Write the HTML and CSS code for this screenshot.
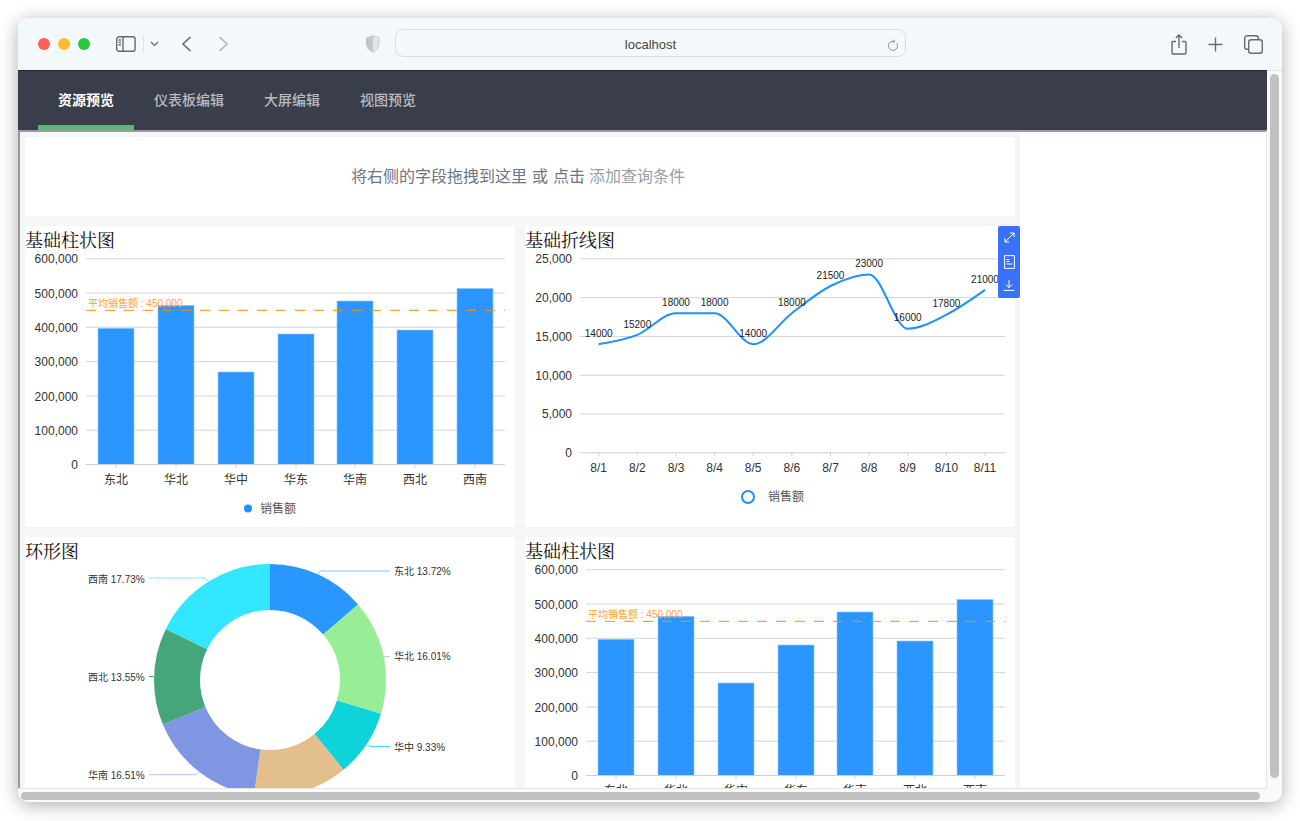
FILE: index.html
```html
<!DOCTYPE html>
<html lang="zh-CN">
<head>
	<meta charset="UTF-8">
	<title>localhost</title>
	<link rel="stylesheet" href="styles.css">
</head>
<body>
	<div class="window">
		<header class="titlebar">
			<div class="lights">
				<span class="light red"></span>
				<span class="light yellow"></span>
				<span class="light green"></span>
			</div>
			<svg class="ico sidebar-ico" width="20" height="16" viewBox="0 0 20 16">
				<rect x="0.7" y="0.7" width="18.4" height="14.6" rx="2.4"/>
				<path d="M7 1v14M2.6 4h2.4M2.6 6.4h2.4M2.6 8.8h2.4"/>
			</svg>
			<span class="tool-sep"></span>
			<svg class="ico chevron-ico" width="9" height="6" viewBox="0 0 9 6"><path d="M1 1l3.5 3.5L8 1"/></svg>
			<svg class="ico back-ico" width="11" height="16" viewBox="0 0 11 16"><path d="M9.5 1L2 8l7.5 7"/></svg>
			<svg class="ico fwd-ico" width="11" height="16" viewBox="0 0 11 16"><path d="M1.5 1L9 8l-7.5 7"/></svg>
			<svg class="shield-ico" width="15" height="18" viewBox="0 0 15 18">
				<path class="shield-l" d="M7.5 .6L1 2.6v6c0 4 2.8 6.800 6.500 8.800z"/>
				<path class="shield-r" d="M7.500 .6L14 2.600v6c0 4-2.800 6.800-6.500 8.800z"/>
			</svg>
			<div class="address">
				<span>localhost</span>
				<svg class="ico reload-ico" width="12" height="13" viewBox="0 0 12 13"><path d="M9.800 4.200A4.600 4.600 0 1 1 6 2.200h1.600M6.200 .6l1.600 1.600-1.600 1.600"/></svg>
			</div>
			<div class="right-tools">
				<svg class="ico" width="16" height="21" viewBox="0 0 16 21">
					<path d="M5 7.500H2a1 1 0 0 0-1 1V19a1 1 0 0 0 1 1h12a1 1 0 0 0 1-1V8.500a1 1 0 0 0-1-1h-3M8 14V1M4.800 4L8 1l3.200 3"/>
				</svg>
				<svg class="ico" width="15" height="15" viewBox="0 0 15 15"><path d="M7.500 .5v14M.5 7.500h14"/></svg>
				<svg class="ico" width="19" height="19" viewBox="0 0 19 19">
					<rect x="4.700" y="4.700" width="13.600" height="13.600" rx="2.500"/>
					<path d="M4.700 14.300H3a2.300 2.300 0 0 1-2.300-2.300V3A2.300 2.300 0 0 1 3 .7h9A2.300 2.300 0 0 1 14.300 3v1.700"/>
				</svg>
			</div>
		</header>

		<div class="frame">
			<div class="view">
				<nav class="nav">
					<a class="tab active">资源预览</a>
					<a class="tab">仪表板编辑</a>
					<a class="tab">大屏编辑</a>
					<a class="tab">视图预览</a>
				</nav>
				<div class="page">
					<div class="canvas">
						<section class="query">将右侧的字段拖拽到这里<span class="word">或</span><span class="word">点击</span><span class="add">添加查询条件</span></section>
						<div class="charts">

							<section class="chart">
								<h2>基础柱状图</h2>
								<svg class="plot" viewBox="25 252 490 275">
									<g class="grid">
										<path d="M86 258.700H505M86 293H505M86 327.300H505M86 361.600H505M86 395.900H505M86 430.200H505"/>
									</g>
									<g class="yaxis">
										<text x="78" y="263">600,000</text>
										<text x="78" y="298">500,000</text>
										<text x="78" y="332">400,000</text>
										<text x="78" y="366">300,000</text>
										<text x="78" y="401">200,000</text>
										<text x="78" y="435">100,000</text>
										<text x="78" y="469">0</text>
									</g>
									<g class="bars">
										<rect x="98" y="328.300" width="36" height="136.200"/>
										<rect x="158" y="305.300" width="36" height="159.200"/>
										<rect x="218" y="372" width="36" height="92.500"/>
										<rect x="278" y="334" width="36" height="130.500"/>
										<rect x="337" y="301" width="36" height="163.500"/>
										<rect x="397" y="330" width="36" height="134.500"/>
										<rect x="457" y="288.500" width="36" height="176"/>
									</g>
									<path class="axis" d="M86 464.500H505M116 465v3M176 465v3M236 465v3M296 465v3M355 465v3M415 465v3M475 465v3"/>
									<g class="xaxis">
										<text x="116" y="484">东北</text>
										<text x="176" y="484">华北</text>
										<text x="236" y="484">华中</text>
										<text x="296" y="484">华东</text>
										<text x="355" y="484">华南</text>
										<text x="415" y="484">西北</text>
										<text x="475" y="484">西南</text>
									</g>
									<path class="avg" d="M86 310.300H505"/>
									<text class="avg-text" x="88" y="307">平均销售额 : 450,000</text>
									<circle class="dot" cx="248" cy="508.500" r="4"/>
									<text class="legend" x="260" y="513">销售额</text>
								</svg>
							</section>

							<section class="chart">
								<h2>基础折线图</h2>
								<svg class="plot" viewBox="525 252 490 275">
									<g class="grid">
										<path d="M580 258.800H1005M580 297.600H1005M580 336.500H1005M580 375.300H1005M580 414H1005"/>
									</g>
									<g class="yaxis">
										<text x="572" y="263">25,000</text>
										<text x="572" y="302">20,000</text>
										<text x="572" y="341">15,000</text>
										<text x="572" y="380">10,000</text>
										<text x="572" y="418">5,000</text>
										<text x="572" y="457">0</text>
									</g>
									<path class="axis" d="M580 452.700H1005M598.700 453v3M637.300 453v3M676 453v3M714.600 453v3M753.200 453v3M791.900 453v3M830.500 453v3M869.100 453v3M907.700 453v3M946.400 453v3M985 453v3"/>
									<g class="xaxis">
										<text x="598.700" y="472">8/1</text>
										<text x="637.300" y="472">8/2</text>
										<text x="676" y="472">8/3</text>
										<text x="714.600" y="472">8/4</text>
										<text x="753.200" y="472">8/5</text>
										<text x="791.900" y="472">8/6</text>
										<text x="830.500" y="472">8/7</text>
										<text x="869.100" y="472">8/8</text>
										<text x="907.700" y="472">8/9</text>
										<text x="946.400" y="472">8/10</text>
										<text x="985" y="472">8/11</text>
									</g>
									<path class="line" d="M598.700 344.200C611.600 342.100 624.400 340.100 637.300 334.900C650.200 329.700 663.100 313.200 676 313.200C688.900 313.200 701.700 313.200 714.600 313.200C727.500 313.200 740.300 344.200 753.200 344.200C766.100 344.200 779 322.900 791.900 313.200C804.800 303.500 817.600 292.500 830.500 286C843.400 279.500 856.200 274.400 869.100 274.400C882 274.400 894.800 328.700 907.700 328.700C920.600 328.700 933.500 321.200 946.400 314.700C959.300 308.200 972.100 299.100 985 289.900"/>
									<g class="values">
										<text x="598.700" y="337">14000</text>
										<text x="637.300" y="328">15200</text>
										<text x="676" y="306">18000</text>
										<text x="714.600" y="306">18000</text>
										<text x="753.200" y="337">14000</text>
										<text x="791.900" y="306">18000</text>
										<text x="830.500" y="279">21500</text>
										<text x="869.100" y="267">23000</text>
										<text x="907.700" y="321">16000</text>
										<text x="946.400" y="307">17800</text>
										<text x="985" y="283">21000</text>
									</g>
									<circle class="ring" cx="748" cy="497" r="6"/>
									<text class="legend" x="768" y="501">销售额</text>
								</svg>
								<div class="chart-tools">
									<svg width="11" height="11" viewBox="0 0 11 11"><path d="M1 10L10 1M6 1h4v4M1 6v4h4"/></svg>
									<svg width="11" height="14" viewBox="0 0 11 14"><path d="M.6.6h9.800v12.800H.6z"/><path class="doc-lines" d="M2.500 4.500h3M2.500 6.500h3M2.500 9h6"/></svg>
									<svg width="12" height="11" viewBox="0 0 12 11"><path d="M6 0v7.500M2.800 4.500L6 7.700l3.200-3.200M.5 10.400h11"/></svg>
								</div>
							</section>

							<section class="chart">
								<h2>环形图</h2>
								<svg class="plot" viewBox="25 563 490 275">
									<g class="donut">
										<circle class="s1" cx="270" cy="680" r="93" pathLength="100" stroke-dasharray="13.72 86.28" stroke-dashoffset="0"/>
										<circle class="s2" cx="270" cy="680" r="93" pathLength="100" stroke-dasharray="16.01 83.99" stroke-dashoffset="-13.72"/>
										<circle class="s3" cx="270" cy="680" r="93" pathLength="100" stroke-dasharray="9.33 90.67" stroke-dashoffset="-29.73"/>
										<circle class="s4" cx="270" cy="680" r="93" pathLength="100" stroke-dasharray="13.15 86.85" stroke-dashoffset="-39.06"/>
										<circle class="s5" cx="270" cy="680" r="93" pathLength="100" stroke-dasharray="16.51 83.49" stroke-dashoffset="-52.21"/>
										<circle class="s6" cx="270" cy="680" r="93" pathLength="100" stroke-dasharray="13.55 86.45" stroke-dashoffset="-68.72"/>
										<circle class="s7" cx="270" cy="680" r="93" pathLength="100" stroke-dasharray="17.73 82.27" stroke-dashoffset="-82.27"/>
									</g>
									<g class="leaders">
										<path class="l1" d="M318 574l2-3H390"/>
										<path class="l2" d="M384 657l2-.6H390"/>
										<path class="l3" d="M367 745l3 1.500H390"/>
										<path class="l5" d="M199 772l-2.500 2.700H149"/>
										<path class="l6" d="M154 676.500H149"/>
										<path class="l7" d="M208 581l-3-3H149"/>
									</g>
									<g class="pie-label">
										<text x="394" y="575">东北 13.72%</text>
										<text x="394" y="660">华北 16.01%</text>
										<text x="394" y="751">华中 9.33%</text>
										<text x="88" y="583">西南 17.73%</text>
										<text x="88" y="681">西北 13.55%</text>
										<text x="88" y="779">华南 16.51%</text>
									</g>
								</svg>
							</section>

							<section class="chart">
								<h2>基础柱状图</h2>
								<svg class="plot" viewBox="25 252 490 275">
									<g class="grid">
										<path d="M86 258.700H505M86 293H505M86 327.300H505M86 361.600H505M86 395.900H505M86 430.200H505"/>
									</g>
									<g class="yaxis">
										<text x="78" y="263">600,000</text>
										<text x="78" y="298">500,000</text>
										<text x="78" y="332">400,000</text>
										<text x="78" y="366">300,000</text>
										<text x="78" y="401">200,000</text>
										<text x="78" y="435">100,000</text>
										<text x="78" y="469">0</text>
									</g>
									<g class="bars">
										<rect x="98" y="328.300" width="36" height="136.200"/>
										<rect x="158" y="305.300" width="36" height="159.200"/>
										<rect x="218" y="372" width="36" height="92.500"/>
										<rect x="278" y="334" width="36" height="130.500"/>
										<rect x="337" y="301" width="36" height="163.500"/>
										<rect x="397" y="330" width="36" height="134.500"/>
										<rect x="457" y="288.500" width="36" height="176"/>
									</g>
									<path class="axis" d="M86 464.500H505M116 465v3M176 465v3M236 465v3M296 465v3M355 465v3M415 465v3M475 465v3"/>
									<g class="xaxis">
										<text x="116" y="484">东北</text>
										<text x="176" y="484">华北</text>
										<text x="236" y="484">华中</text>
										<text x="296" y="484">华东</text>
										<text x="355" y="484">华南</text>
										<text x="415" y="484">西北</text>
										<text x="475" y="484">西南</text>
									</g>
									<path class="avg" d="M86 310.300H505"/>
									<text class="avg-text" x="88" y="307">平均销售额 : 450,000</text>
									<circle class="dot" cx="248" cy="508.500" r="4"/>
									<text class="legend" x="260" y="513">销售额</text>
								</svg>
							</section>

						</div>
					</div>
				</div>
			</div>
			<div class="vbar"><span></span></div>
			<div class="hbar"><span></span></div>
		</div>
	</div>
</body>
</html>
```

FILE: styles.css
```css
*{
	margin: 0;
	padding: 0;
	box-sizing: border-box;
}
html, body{
	height: 100%;
	overflow: hidden;
}
body{
	padding: 18px;
	background-color: #fff;
	font: 14px 'Liberation Sans', 'Noto Sans CJK SC', sans-serif;
}
.window{
	width: 1264px;
	height: 784px;
	border-radius: 10px;
	overflow: hidden;
	background-color: #fafafa;
	box-shadow: 0 3px 18px rgba(0, 0, 0, 0.32);
	display: flex;
	flex-direction: column;
}

/* browser chrome */
.titlebar{
	height: 52px;
	flex: none;
	background-color: #f3f8fb;
	display: flex;
	align-items: center;
	padding: 0 19px 0 20px;
}
.lights{
	display: flex;
	gap: 8px;
}
.light{
	width: 12px;
	height: 12px;
	border-radius: 50%;
}
.red{ background-color: #ff5f57; }
.yellow{ background-color: #febc2e; }
.green{ background-color: #28c840; }
.ico{
	fill: none;
	stroke: #666a6e;
	stroke-width: 1.4;
	flex: none;
}
.sidebar-ico{
	margin-left: 26px;
}
.tool-sep{
	width: 1px;
	height: 18px;
	margin-left: 7px;
	background-color: #dfe3e6;
}
.chevron-ico{
	margin-left: 6px;
	stroke-width: 1.2;
}
.back-ico{
	margin-left: 22px;
	stroke-width: 1.6;
}
.fwd-ico{
	margin-left: 26px;
	stroke: #b4b8bb;
	stroke-width: 1.6;
}
.shield-ico{
	margin-left: 136px;
	flex: none;
}
.shield-l{ fill: #c2c6c9; }
.shield-r{ fill: #e2e5e7; stroke: #c2c6c9; stroke-width: .8; }
.address{
	width: 511px;
	height: 28px;
	margin: 0 0 2px 15px;
	padding-top: 2px;
	flex: none;
	border: 1px solid #d9dee2;
	border-radius: 8px;
	background-color: #f5f9fb;
	color: #444;
	font-size: 13px;
	position: relative;
	display: flex;
	align-items: center;
	justify-content: center;
}
.reload-ico{
	position: absolute;
	right: 6px;
	top: 9px;
	stroke: #8b8f93;
	stroke-width: 1;
}
.right-tools{
	margin-left: auto;
	display: flex;
	align-items: center;
	gap: 21px;
}

/* scroll area */
.frame{
	flex: 1;
	min-height: 0;
	display: grid;
	grid-template-columns: 1249px 15px;
	grid-template-rows: 719px 13px;
}
.view{
	overflow: hidden;
	border-top: 1px solid #23252d;
	border-bottom: 1px solid #e6e6e6;
	display: flex;
	flex-direction: column;
}
.nav{
	height: 59px;
	flex: none;
	padding-left: 20px;
	background-color: #3a3d4a;
	display: flex;
}
.tab{
	padding: 0 20px;
	line-height: 59px;
	color: #b9bbc1;
	font-size: 14px;
	font-weight: 500;
}
.tab.active{
	color: #fff;
	font-weight: 700;
	border-bottom: 5px solid #5fb37a;
}
.page{
	flex: 1;
	min-height: 0;
	background-color: #fff;
	border-top: 2px solid #9b9b9b;
	border-left: 2px solid #9b9b9b;
	border-right: 1px solid #e6e6e6;
}
.canvas{
	width: 1000px;
	padding: 5px;
	background-color: #f4f6f8;
}
.query{
	height: 79px;
	padding: 0 4px 4px 0;
	background-color: #fff;
	color: #6e7480;
	font-size: 16px;
	display: flex;
	align-items: center;
	justify-content: center;
}
.word{
	margin-left: 5px;
}
.add{
	margin-left: 4px;
	color: #9a9ea6;
}
.charts{
	margin-top: 10px;
	display: grid;
	grid-template-columns: 490px 490px;
	grid-auto-rows: 301px;
	gap: 10px;
}
.chart{
	background-color: #fff;
	position: relative;
}
.chart h2{
	height: 26px;
	font: 400 18px/31px 'Liberation Serif', 'Noto Serif CJK SC', serif;
	color: #111;
}
.plot{
	display: block;
	width: 490px;
	height: 275px;
}

/* chart parts */
.grid path{
	stroke: #d4d4d4;
	fill: none;
}
.axis{
	stroke: #cfcfcf;
	fill: none;
}
.yaxis text{
	text-anchor: end;
	font-size: 12px;
	fill: #333;
}
.xaxis text{
	text-anchor: middle;
	font-size: 12px;
	fill: #333;
}
.bars rect{
	fill: #2b96ff;
	stroke: #8cc6ff;
	stroke-width: .6;
}
.avg{
	stroke: #ff8c00;
	stroke-dasharray: 10 9;
	fill: none;
}
.avg-text{
	font-size: 10px;
	fill: #ffa033;
}
.dot{
	fill: #1e90ff;
}
.ring{
	fill: #fff;
	stroke: #1e90ff;
	stroke-width: 2;
}
.legend{
	font-size: 12px;
	fill: #555;
}
.line{
	fill: none;
	stroke: #1e90ff;
	stroke-width: 2;
}
.values text{
	text-anchor: middle;
	font-size: 10px;
	fill: #222;
}
.donut circle{
	fill: none;
	stroke-width: 46;
	transform: rotate(-90deg);
	transform-origin: 270px 680px;
}
.s1{ stroke: #2a96ff; }
.s2{ stroke: #97ee97; }
.s3{ stroke: #0ed3d9; }
.s4{ stroke: #e2bf8c; }
.s5{ stroke: #8196e2; }
.s6{ stroke: #44a67a; }
.s7{ stroke: #33e6ff; }
.leaders path{
	fill: none;
}
.l1{ stroke: #85c3ff; }
.l2{ stroke: #97ee97; }
.l3{ stroke: #3fdde2; }
.l5{ stroke: #b4c0ee; }
.l6{ stroke: #44a67a; }
.l7{ stroke: #7ceeff; }
.pie-label text{
	font-size: 10px;
	fill: #333;
}
.chart-tools{
	position: absolute;
	top: 0;
	right: -5px;
	width: 22px;
	height: 72px;
	padding: 6px 0 7px;
	border-radius: 2px;
	background-color: #3a70fa;
	display: flex;
	flex-direction: column;
	align-items: center;
	justify-content: space-between;
}
.chart-tools svg{
	fill: none;
	stroke: #fff;
	stroke-width: 1;
}
.chart-tools .doc-lines{
	stroke-width: 1.2;
}

/* scrollbars */
.vbar{
	padding: 3px 2px 0 3px;
	border-top: 1px solid #e6e6e6;
}
.vbar span{
	display: block;
	width: 9px;
	height: 704px;
	border-radius: 5px;
	background-color: #c1c1c1;
}
.hbar{
	grid-column: 1 / 3;
	padding: 3px 0 0 3px;
}
.hbar span{
	display: block;
	width: 1239px;
	height: 8px;
	border-radius: 4px;
	background-color: #c1c1c1;
}
```
